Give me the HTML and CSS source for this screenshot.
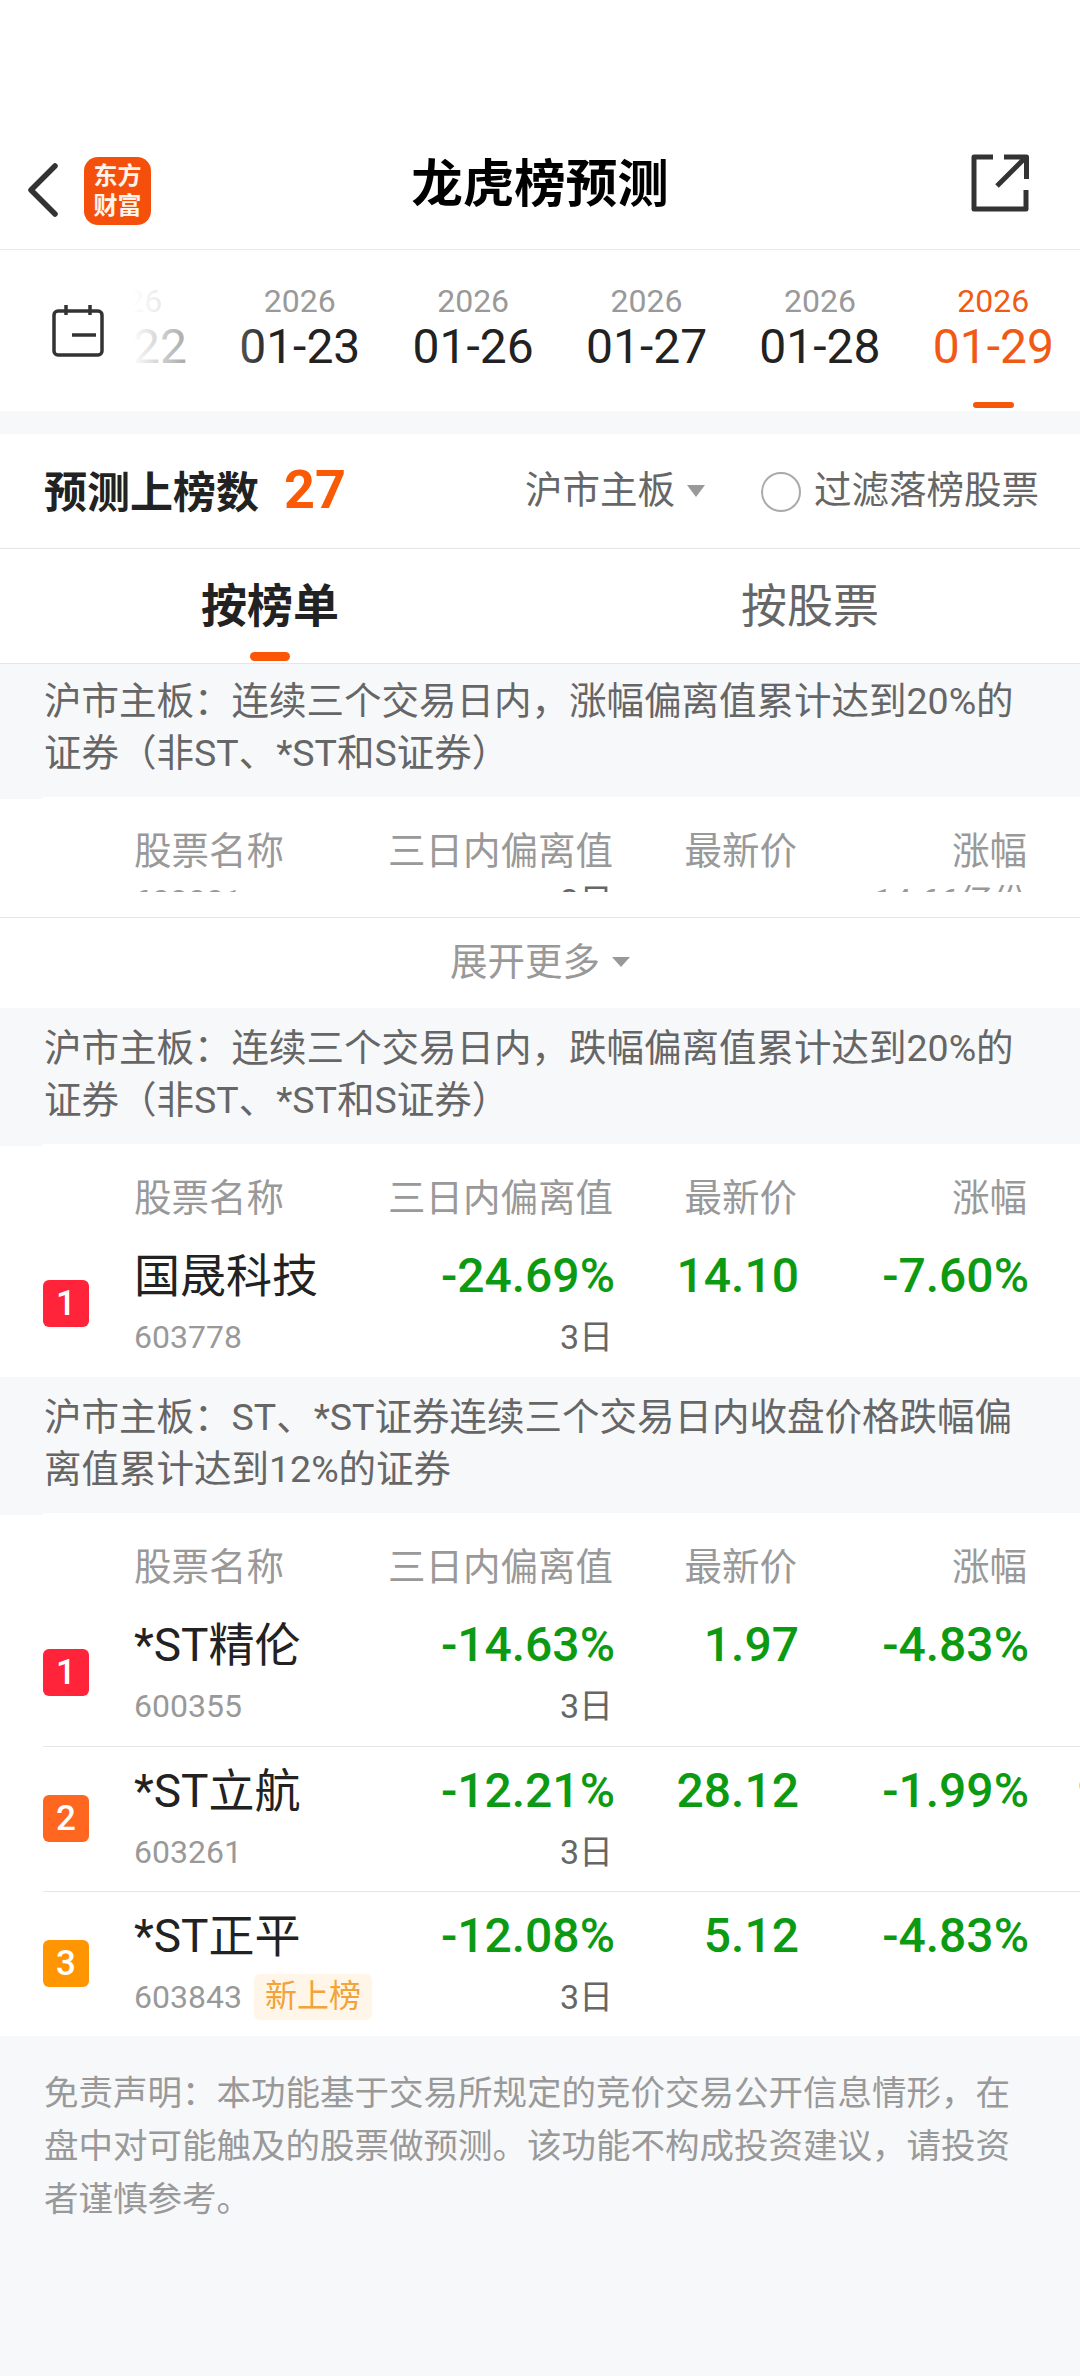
FILE: index.html
```html
<!DOCTYPE html>
<html lang="zh-CN">
<head>
    <meta charset="UTF-8">
    <meta name="viewport" content="width=device-width, initial-scale=1.0">
    <title>龙虎榜预测</title>
    <link rel="stylesheet" href="styles.css">
</head>
<body>
    <header class="nav">
        <div class="nav-left">
            <svg class="icon-back" width="32" height="54" viewBox="0 0 32 54"><path d="M28 3 L4 27 L28 51" fill="none" stroke="#333" stroke-width="5.5" stroke-linecap="round" stroke-linejoin="round"/></svg>
            <div class="logo">东方<br>财富</div>
        </div>
        <h1 class="nav-title">龙虎榜预测</h1>
        <div class="nav-right">
            <svg width="58" height="58" viewBox="0 0 58 58"><path d="M22 3 H3 V55 H55 V36 M33 3 H55.5 V25 M55 3 L26 32" fill="none" stroke="#333" stroke-width="5" stroke-linejoin="round"/></svg>
        </div>
    </header>

    <section class="dates">
        <div class="dates-icon">
            <svg width="52" height="52" viewBox="0 0 52 52"><rect x="2" y="6" width="48" height="44" rx="4" fill="none" stroke="#333" stroke-width="3.5"/><path d="M14 0 V10 M38 0 V10 M20 30 H44" fill="none" stroke="#333" stroke-width="3.5"/></svg>
        </div>
        <div class="dates-strip">
            <div class="date-item"><span class="date-year">2026</span><span class="date-day">01-22</span></div>
            <div class="date-item"><span class="date-year">2026</span><span class="date-day">01-23</span></div>
            <div class="date-item"><span class="date-year">2026</span><span class="date-day">01-26</span></div>
            <div class="date-item"><span class="date-year">2026</span><span class="date-day">01-27</span></div>
            <div class="date-item"><span class="date-year">2026</span><span class="date-day">01-28</span></div>
            <div class="date-item active"><span class="date-year">2026</span><span class="date-day">01-29</span><i class="date-bar"></i></div>
            <div class="dates-fade"></div>
        </div>
    </section>

    <section class="summary">
        <span class="summary-title">预测上榜数</span>
        <span class="summary-count">27</span>
        <span class="summary-market">沪市主板</span>
        <i class="caret"></i>
        <i class="radio"></i>
        <span class="summary-filter">过滤落榜股票</span>
    </section>

    <nav class="tabs">
        <div class="tab active">按榜单<i class="tab-bar"></i></div>
        <div class="tab">按股票</div>
    </nav>

    <p class="note note-first">沪市主板：连续三个交易日内，涨幅偏离值累计达到20%的证券（非ST、*ST和S证券）</p>
    <div class="table">
        <div class="table-head">
            <span class="col-name">股票名称</span>
            <span class="col-num">三日内偏离值</span>
            <span class="col-num">最新价</span>
            <span class="col-num">涨幅</span>
        </div>
        <div class="table-clip">
            <span class="col-name">603001</span>
            <span class="col-num">3日</span>
            <span></span>
            <span class="col-num">14.66亿份</span>
        </div>
    </div>
    <div class="more"><span class="more-text">展开更多</span><i class="caret caret-small"></i></div>

    <p class="note">沪市主板：连续三个交易日内，跌幅偏离值累计达到20%的证券（非ST、*ST和S证券）</p>
    <div class="table">
        <div class="table-head">
            <span class="col-name">股票名称</span>
            <span class="col-num">三日内偏离值</span>
            <span class="col-num">最新价</span>
            <span class="col-num">涨幅</span>
        </div>
        <div class="row">
            <span class="rank rank-1">1</span>
            <span class="name">国晟科技</span>
            <span class="value">-24.69%</span>
            <span class="value">14.10</span>
            <span class="value">-7.60%</span>
            <span class="code">603778</span>
            <span class="days">3日</span>
        </div>
    </div>

    <p class="note">沪市主板：ST、*ST证券连续三个交易日内收盘价格跌幅偏离值累计达到12%的证券</p>
    <div class="table">
        <div class="table-head">
            <span class="col-name">股票名称</span>
            <span class="col-num">三日内偏离值</span>
            <span class="col-num">最新价</span>
            <span class="col-num">涨幅</span>
        </div>
        <div class="row">
            <span class="rank rank-1">1</span>
            <span class="name">*ST精伦</span>
            <span class="value">-14.63%</span>
            <span class="value">1.97</span>
            <span class="value">-4.83%</span>
            <span class="code">600355</span>
            <span class="days">3日</span>
        </div>
        <div class="row">
            <span class="rank rank-2">2</span>
            <span class="name">*ST立航</span>
            <span class="value">-12.21%</span>
            <span class="value">28.12</span>
            <span class="value">-1.99%</span>
            <span class="next-col">9</span>
            <span class="code">603261</span>
            <span class="days">3日</span>
        </div>
        <div class="row">
            <span class="rank rank-3">3</span>
            <span class="name">*ST正平</span>
            <span class="value">-12.08%</span>
            <span class="value">5.12</span>
            <span class="value">-4.83%</span>
            <span class="code">603843<em class="tag">新上榜</em></span>
            <span class="days">3日</span>
        </div>
    </div>

    <p class="disclaimer">免责声明：本功能基于交易所规定的竞价交易公开信息情形，在盘中对可能触及的股票做预测。该功能不构成投资建议，请投资者谨慎参考。</p>
</body>
</html>
```

FILE: styles.css
```css
* {
    box-sizing: border-box;
}
body {
    font-family: Roboto, "Noto Sans CJK SC", sans-serif;
    background-color: #f7f8fa;
    margin: 0;
    min-height: 2376px;
    overflow-x: hidden;
    color: #222;
}
i, em {
    font-style: normal;
}

/* Шапка */
.nav {
    display: grid;
    grid-template-columns: 1fr auto 1fr;
    align-items: center;
    height: 250px;
    padding-top: 130px;
    background-color: #fff;
    border-bottom: 1px solid #e9e9e9;
}
.nav-left {
    display: flex;
    align-items: center;
    gap: 25px;
    padding-left: 27px;
}
.logo {
    width: 67px;
    height: 68px;
    margin-top: 2px;
    border-radius: 14px;
    background-color: #f4500c;
    color: #fff3ea;
    font-size: 24px;
    font-weight: 700;
    line-height: 30px;
    text-align: center;
    padding-top: 4px;
}
.nav-title {
    margin: 0 0 20px;
    font-size: 51.5px;
    font-weight: 700;
    color: #000;
}
.nav-right {
    display: flex;
    justify-content: flex-end;
    padding: 0 51px 13px 0;
}

/* Даты */
.dates {
    display: flex;
    height: 161px;
    background-color: #fff;
}
.dates-icon {
    flex: 0 0 132px;
    padding: 55px 0 0 52px;
}
.dates-strip {
    flex: 1;
    display: flex;
    justify-content: flex-end;
    overflow: hidden;
    position: relative;
}
.date-item {
    flex: 0 0 173.4px;
    display: flex;
    flex-direction: column;
    align-items: center;
    padding-top: 36px;
}
.date-year {
    font-size: 32px;
    line-height: 30px;
    color: #999;
}
.date-day {
    font-size: 48px;
    line-height: 46px;
    margin-top: 8px;
    color: #222;
}
.date-item.active .date-year,
.date-item.active .date-day {
    color: #f05a14;
}
.date-bar {
    width: 41px;
    height: 6px;
    margin-top: 32px;
    border-radius: 3px;
    background-color: #f5570c;
}
.dates-fade {
    position: absolute;
    left: 0;
    top: 0;
    bottom: 0;
    width: 140px;
    background: linear-gradient(to right, #fff 0%, rgba(255, 255, 255, 0) 100%);
}

/* Итог */
.summary {
    display: flex;
    align-items: center;
    height: 115px;
    margin-top: 23px;
    padding-left: 44px;
    background-color: #fff;
    border-bottom: 1px solid #e6e6e6;
}
.summary-title {
    font-size: 43px;
    font-weight: 700;
    color: #222;
    margin-top: -4px;
}
.summary-count {
    font-size: 54px;
    font-weight: 700;
    color: #fa5a05;
    margin-left: 25px;
    margin-top: -4px;
}
.summary-market {
    font-size: 37.5px;
    color: #666;
    margin-left: 179px;
    margin-top: -9px;
}
.summary-filter {
    font-size: 37.5px;
    color: #666;
    margin-left: 13px;
    margin-top: -9px;
}
.caret {
    width: 0;
    height: 0;
    border-left: 9px solid transparent;
    border-right: 9px solid transparent;
    border-top: 12px solid #999;
    margin-left: 12px;
}
.caret-small {
    border-top-width: 10px;
    margin-top: -2px;
}
.radio {
    width: 40px;
    height: 40px;
    border-radius: 50%;
    border: 2px solid #aaa;
    margin-left: 56px;
    margin-top: 2px;
}

/* Вкладки */
.tabs {
    display: flex;
    height: 115px;
    background-color: #fff;
    border-bottom: 1px solid #e6e6e6;
}
.tab {
    flex: 1;
    display: flex;
    flex-direction: column;
    align-items: center;
    padding-top: 29px;
    font-size: 46px;
    line-height: 56px;
    color: #666;
}
.tab.active {
    font-weight: 700;
    color: #222;
}
.tab-bar {
    width: 40px;
    height: 9px;
    margin-top: 18px;
    border-radius: 5px;
    background-color: #fb5605;
}

/* Таблицы */
.note {
    margin: 0;
    padding: 14px 44px 18px;
    font-size: 37.5px;
    line-height: 52px;
    color: #666;
}
.note-first {
    padding-top: 11px;
}
.table {
    background-color: #fff;
    position: relative;
}
.table::before {
    content: "";
    position: absolute;
    left: 0;
    top: 0;
    width: 43px;
    height: 2px;
    background-color: #f7f8fa;
}
.table-head, .table-clip, .row {
    display: grid;
    grid-template-columns: 91px 250px 229px 184px 230px 96px;
}
.table-head {
    height: 88px;
    padding: 30px 0 0 43px;
    font-size: 37.5px;
    line-height: 48px;
    color: #999;
}
.col-name {
    grid-column: 2;
}
.col-num {
    text-align: right;
}
.table-clip {
    height: 32px;
    padding-left: 43px;
    font-size: 32px;
    line-height: 24px;
    color: #999;
}
.table-clip span {
    height: 7px;
    padding-top: 4px;
    overflow: hidden;
}
.table-clip .col-num {
    font-size: 34px;
}
.table-clip .col-num:nth-child(2) {
    color: #666;
}
.more {
    display: flex;
    align-items: center;
    justify-content: center;
    height: 91px;
    background-color: #fff;
    border-top: 1px solid #e6e6e6;
    font-size: 37.5px;
    color: #999;
}
.more-text {
    margin-top: -10px;
}
.row {
    grid-template-rows: 56px 44px;
    row-gap: 11px;
    height: 145px;
    margin-left: 43px;
    padding-top: 16px;
    overflow: hidden;
}
.row + .row {
    border-top: 1px solid #e6e6e6;
}
.rank {
    grid-row: 1 / 3;
    align-self: center;
    display: flex;
    align-items: center;
    justify-content: center;
    width: 46px;
    height: 47px;
    border-radius: 6px;
    font-size: 35px;
    font-weight: 500;
    color: #fff;
}
.rank-1 {
    background-color: #ff2439;
}
.rank-2 {
    background-color: #ff661f;
}
.rank-3 {
    background-color: #ff9500;
}
.name {
    font-size: 46px;
    line-height: 56px;
    white-space: nowrap;
}
.value {
    font-size: 48px;
    font-weight: 500;
    line-height: 56px;
    text-align: right;
    color: #0d9a13;
    margin-right: -2px;
}
.next-col {
    padding-left: 51px;
    font-size: 36px;
    line-height: 56px;
    color: #333;
}
.code {
    grid-column: 2;
    display: flex;
    align-items: center;
    font-size: 32px;
    line-height: 44px;
    color: #999;
    white-space: nowrap;
}
.tag {
    margin-left: 12px;
    padding: 0 11px;
    height: 46px;
    line-height: 44px;
    font-size: 32px;
    border-radius: 6px;
    background-color: #fff6e9;
    color: #f2a33a;
}
.days {
    font-size: 34px;
    line-height: 44px;
    text-align: right;
    color: #666;
}

.disclaimer {
    margin: 0;
    padding: 31px 44px 0;
    font-size: 34.5px;
    line-height: 53px;
    color: #999;
}
```
